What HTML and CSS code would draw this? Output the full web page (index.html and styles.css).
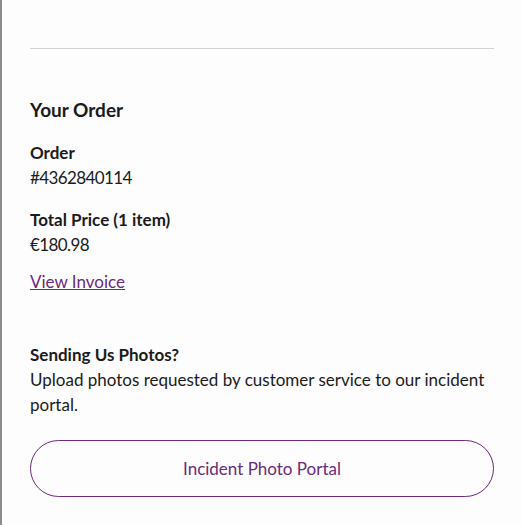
FILE: index.html
```html
<!DOCTYPE html>
<html lang="en">
<head>
  <meta charset="UTF-8" />
  <title>Your Order</title>
  <meta name="viewport" content="width=device-width, initial-scale=1.0" />
  <link rel="stylesheet" href="styles.css">
</head>
<body>

  <div class="panel">
    <hr class="divider">

    <section class="order">
      <h2>Your Order</h2>

      <div class="field">
        <h3>Order</h3>
        <p class="value">#4362840114</p>
      </div>

      <div class="field">
        <h3>Total Price (1 item)</h3>
        <p class="value">€180.98</p>
      </div>

      <a class="invoice" href="#">View Invoice</a>
    </section>

    <section class="photos">
      <h3>Sending Us Photos?</h3>
      <p>Upload photos requested by customer service to our incident portal.</p>
      <button class="portal">Incident Photo Portal</button>
    </section>
  </div>

</body>
</html>
```

FILE: styles.css
```css
html, body {
  margin: 0;
  padding: 0;
  background: #fdfdfd;
}

body {
  font-family: Lato, "Noto Sans", sans-serif;
  color: #1b1b1b;
  font-size: 17px;
  line-height: 25px;
}

.panel {
  box-sizing: border-box;
  height: 525px;
  border-left: 2px solid #8c8c8c;
  padding: 48px 28px 0 28px;
  overflow: hidden;
}

.divider {
  margin: 0;
  border: none;
  border-top: 1px solid #d2d2d2;
}

h2, h3, p {
  margin: 0;
}

h2 {
  font-size: 19px;
  font-weight: 700;
  margin-top: 48px;
}

h3 {
  font-size: 17px;
  font-weight: 700;
}

.field {
  margin-top: 18px;
}

.field + .field {
  margin-top: 17px;
}

.value {
  letter-spacing: -0.6px;
}

.invoice {
  display: inline-block;
  margin-top: 12px;
  color: #6b2a7b;
}

.photos {
  margin-top: 48px;
}

.portal {
  display: block;
  width: 100%;
  height: 57px;
  margin-top: 23px;
  background: transparent;
  border: 1.5px solid #6b2a7b;
  border-radius: 30px;
  color: #6b2a7b;
  font-family: inherit;
  font-size: 17px;
}
```
